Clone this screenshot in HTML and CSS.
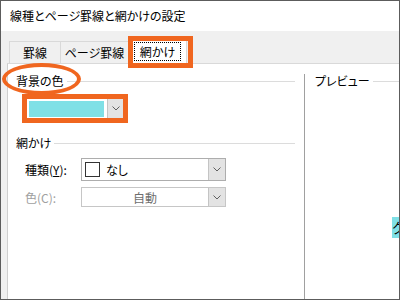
FILE: index.html
```html
<!DOCTYPE html>
<html lang="ja">
<head>
  <meta charset="UTF-8">
  <meta name="viewport" content="width=device-width, initial-scale=1.0">
  <title>線種とページ罫線と網かけの設定</title>
  <link rel="stylesheet" href="styles.css">
</head>
<body>
  <div class="window">
    <div class="titlebar">線種とページ罫線と網かけの設定</div>
    <div class="dialog">
      <div class="tabs">
        <div class="tab">罫線</div>
        <div class="tab tab-wide">ページ罫線</div>
        <div class="tab tab-active">
          <span class="focus">網かけ</span>
          <span class="mark-box"></span>
        </div>
      </div>
      <div class="page">
        <div class="settings">
          <div class="group-title"><span>背景の色</span></div>
          <div class="color-combo">
            <span class="swatch"></span>
            <span class="drop-btn">
              <svg width="8" height="5" viewBox="0 0 8 5"><polyline points="0.5,0.5 4,4 7.5,0.5" fill="none" stroke="#606060"/></svg>
            </span>
          </div>
          <div class="group-title shading"><span>網かけ</span></div>
          <div class="field">
            <label>種類(<u>Y</u>):</label>
            <div class="combo">
              <span class="combo-value"><span class="pattern"></span>なし</span>
              <span class="drop-btn">
                <svg width="8" height="5" viewBox="0 0 8 5"><polyline points="0.5,0.5 4,4 7.5,0.5" fill="none" stroke="#606060"/></svg>
              </span>
            </div>
          </div>
          <div class="field disabled">
            <label>色(C):</label>
            <div class="combo">
              <span class="combo-value center">自動</span>
              <span class="drop-btn">
                <svg width="8" height="5" viewBox="0 0 8 5"><polyline points="0.5,0.5 4,4 7.5,0.5" fill="none" stroke="#606060"/></svg>
              </span>
            </div>
          </div>
        </div>
        <div class="preview">
          <div class="group-title"><span>プレビュー</span></div>
          <div class="preview-body"><span class="sample">ク</span></div>
        </div>
      </div>
    </div>
    <span class="mark-ellipse"></span>
  </div>
</body>
</html>
```

FILE: styles.css
```css
body {
  margin: 0;
}

.window {
  position: relative;
  width: 400px;
  height: 300px;
  box-sizing: border-box;
  border: 1px solid #5c5c5c;
  background: #fff;
  display: flex;
  flex-direction: column;
  overflow: hidden;
  font-family: "Noto Sans CJK JP", sans-serif;
  font-feature-settings: "palt";
  color: #000;
}

.titlebar {
  height: 30px;
  line-height: 30px;
  padding-left: 9px;
  font-size: 12px;
}

.dialog {
  flex: 1;
  display: flex;
  flex-direction: column;
  background: #f0f0f0;
}

/* tab strip */
.tabs {
  height: 32px;
  display: flex;
  align-items: flex-end;
  padding-left: 8px;
  font-size: 12px;
}

.tab {
  width: 51px;
  height: 22px;
  box-sizing: border-box;
  border-top: 1px solid #d9d9d9;
  border-left: 1px solid #d9d9d9;
  display: flex;
  align-items: center;
  justify-content: center;
}

.tab-wide {
  width: 68px;
}

.tab-active {
  position: relative;
  z-index: 1;
  width: 59px;
  height: 27px;
  margin-bottom: -1px;
  background: #fff;
  border-right: 1px solid #d9d9d9;
}

.focus {
  padding: 0 5px;
  line-height: 17px;
  outline: 1px dotted #000;
}

.mark-box {
  position: absolute;
  left: -1px;
  top: -2px;
  width: 65px;
  height: 32px;
  box-sizing: border-box;
  border: 5px solid #f0661f;
}

/* page */
.page {
  flex: 1;
  display: flex;
  margin-left: 6px;
  background: #fff;
  border-top: 1px solid #d9d9d9;
  border-left: 1px solid #cfcfcf;
}

.settings {
  width: 296px;
  box-sizing: border-box;
  padding: 9px 9px 0 0;
}

.group-title {
  display: flex;
  align-items: center;
  gap: 3px;
  padding-left: 8px;
  font-size: 12px;
  line-height: 16px;
}

.group-title::after {
  content: "";
  flex: 1;
  border-top: 1px solid #dcdcdc;
}

.group-title.shading {
  margin-top: 17px;
}

.color-combo {
  display: flex;
  align-items: center;
  width: 96px;
  height: 19px;
  box-sizing: border-box;
  margin: 10px 0 0 19px;
  padding-left: 2px;
  background: #fff;
  outline: 5px solid #f0661f;
}

.swatch {
  width: 75px;
  height: 16px;
  background: #7fe0e6;
}

.drop-btn {
  margin-left: auto;
  width: 17px;
  align-self: stretch;
  box-sizing: border-box;
  background: #e3e3e3;
  border-left: 1px solid #c4c4c4;
  display: flex;
  align-items: center;
  justify-content: center;
}

.color-combo .drop-btn {
  width: 16px;
}

.field {
  display: flex;
  align-items: center;
  margin-top: 7px;
  padding-left: 17px;
  font-size: 12px;
}

.field label {
  width: 56px;
}

.combo {
  display: flex;
  width: 145px;
  height: 23px;
  box-sizing: border-box;
  border: 1px solid #adadad;
  background: #fff;
}

.combo-value {
  flex: 1;
  display: flex;
  align-items: center;
  gap: 6px;
  padding-left: 3px;
}

.combo-value.center {
  justify-content: center;
  padding-left: 0;
  color: #6d6d6d;
}

.pattern {
  width: 15px;
  height: 15px;
  box-sizing: border-box;
  border: 1px solid #333;
}

.field.disabled {
  margin-top: 6px;
}

.field.disabled label {
  color: #a0a0a0;
}

.field.disabled .combo {
  height: 20px;
  border-color: #c6c6c6;
}

/* preview */
.preview {
  flex: 1;
  margin-top: 10px;
  border-left: 1px solid #a0a0a0;
}

.preview .group-title {
  line-height: 14px;
  padding-left: 10px;
}

.preview-body {
  display: flex;
  justify-content: flex-end;
  padding-top: 129px;
}

.sample {
  width: 7px;
  height: 21px;
  overflow: hidden;
  background: #7fe0e6;
  font-size: 14px;
  line-height: 21px;
}

.mark-ellipse {
  position: absolute;
  left: 1px;
  top: 62px;
  width: 79px;
  height: 32px;
  box-sizing: border-box;
  border: 4px solid #f0661f;
  border-radius: 50%;
}
```
